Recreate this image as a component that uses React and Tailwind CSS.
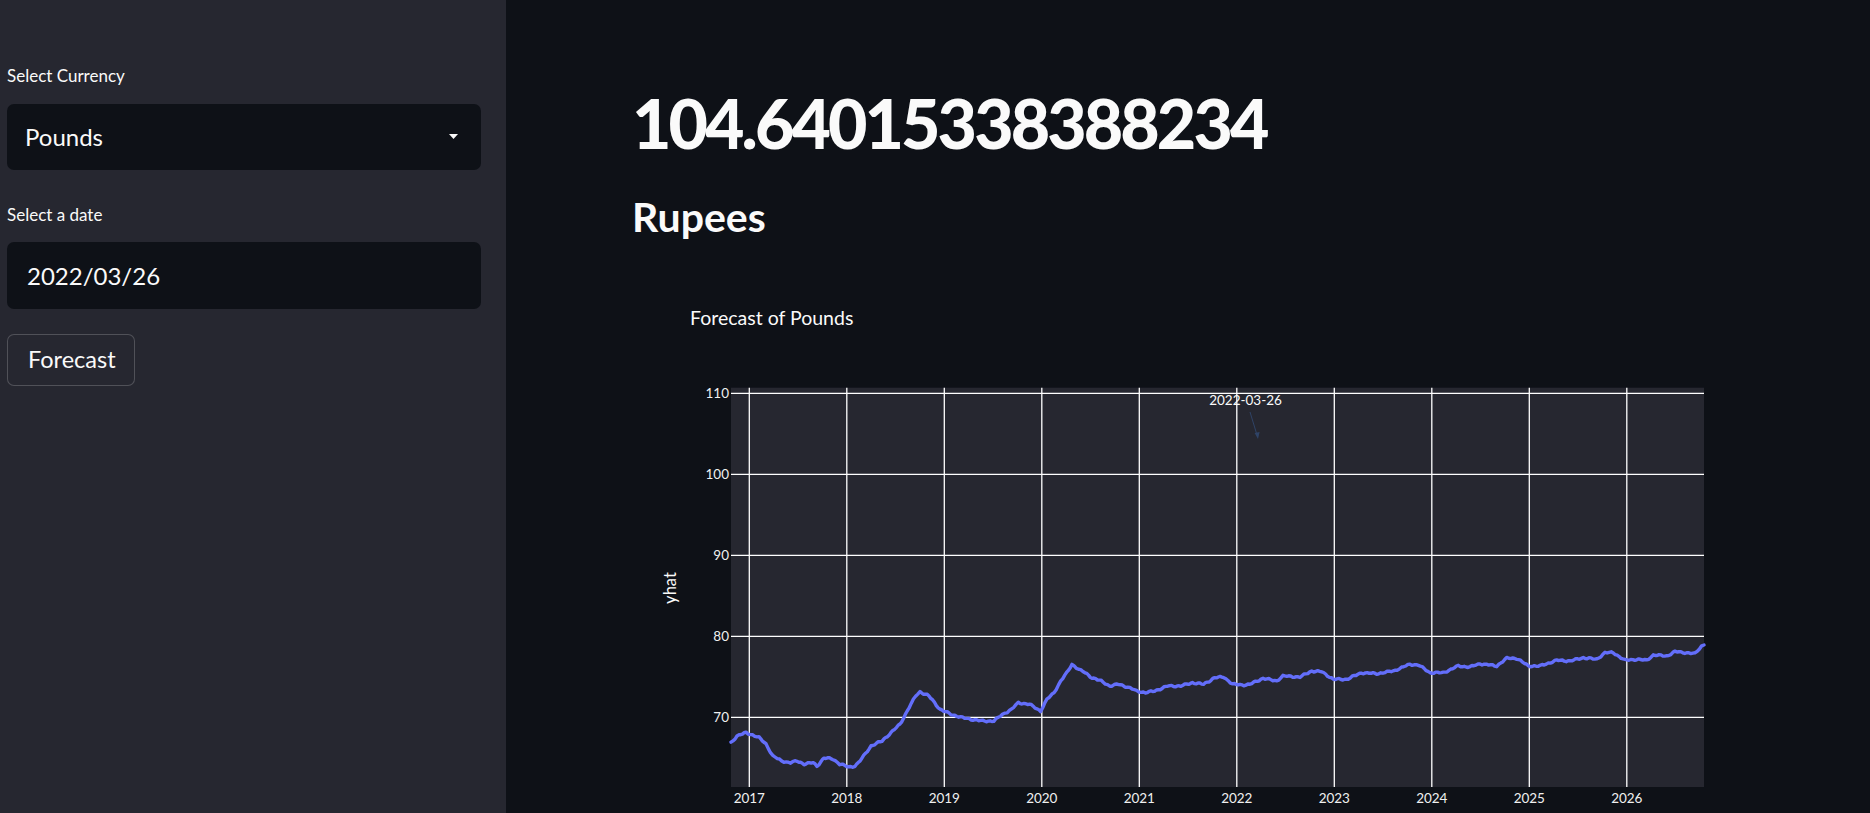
import React from "react";

const OX = 632;
const OY = 290;

const RAW = [
  [731, 741.7], [737, 735], [746, 731.7], [752.7, 734], [759, 736.7], [766, 743],
  [772.8, 755], [781.7, 760], [790.6, 761.7], [797, 760], [804, 763], [813, 761.7],
  [817, 765], [824, 757], [833, 758], [839.7, 763], [848.7, 766], [855, 765],
  [860, 760], [871, 745], [882, 740], [891, 731.7], [900, 723.3], [909, 706.7],
  [915.6, 695], [920, 690.7], [929, 695], [940, 708.3], [951, 713.3], [962.5, 716.7],
  [971, 718.3], [982.6, 720], [993.8, 720], [1002.7, 713.3], [1011.6, 708.3],
  [1018.3, 701.7], [1029.5, 703.3], [1040.6, 710], [1047, 698.3], [1054, 691.7],
  [1060.7, 680], [1067, 671.7], [1072, 663.3], [1078.6, 668.3], [1085, 671.7],
  [1092, 676.7], [1101, 680], [1109.8, 685], [1118.7, 683.3], [1127.7, 686],
  [1136.6, 690], [1145.5, 691.7], [1154.5, 690], [1167.8, 685], [1181, 685],
  [1192.4, 681.7], [1203.6, 683.3], [1214.7, 676.7], [1223.7, 676], [1232.6, 683.3],
  [1243.8, 684], [1250, 683.3], [1263, 677.3], [1276.7, 680], [1283, 675],
  [1300, 676], [1311.7, 670], [1321.7, 670.7], [1333.3, 678.3], [1346.7, 678.3],
  [1361.7, 671.7], [1376.7, 672.7], [1393.3, 670], [1410, 663.3], [1418.3, 664],
  [1430, 671.7], [1443.3, 671.7], [1458.3, 665], [1470, 666], [1480, 662.7],
  [1496.7, 665], [1506.7, 657.3], [1516.7, 657.3], [1528.3, 665], [1540, 665],
  [1556.7, 659.3], [1570, 660], [1583.3, 656.7], [1596.7, 658.3], [1605, 651.7],
  [1613.3, 651.7], [1625, 659.3], [1636.7, 658.3], [1646.7, 659.3], [1653.3, 654],
  [1666.7, 655], [1675, 650.7], [1686.7, 651.7], [1695, 652.7], [1701.7, 645],
  [1704, 644],
];

function buildPoints() {
  const pts = [];
  for (let i = 0; i < RAW.length - 1; i++) {
    const [x0, y0] = RAW[i];
    const [x1, y1] = RAW[i + 1];
    const steps = Math.max(1, Math.round((x1 - x0) / 2));
    for (let s = 0; s < steps; s++) {
      const t = s / steps;
      const x = x0 + (x1 - x0) * t;
      const jitter = Math.sin(x * 0.9) * 0.6 + Math.sin(x * 0.37) * 0.4;
      pts.push([x - OX, y0 + (y1 - y0) * t + jitter - OY]);
    }
  }
  const last = RAW[RAW.length - 1];
  pts.push([last[0] - OX, last[1] - OY]);
  return pts.map((p) => `${p[0].toFixed(1)},${p[1].toFixed(1)}`).join(" ");
}

const LINE = buildPoints();

const PLOT_L = 731 - OX;
const PLOT_T = 386.7 - OY;
const PLOT_W = 1704 - 731;
const PLOT_H = 786 - 386.7;

const years = [2017, 2018, 2019, 2020, 2021, 2022, 2023, 2024, 2025, 2026];
const yvals = [110, 100, 90, 80, 70];
const xOf = (yr) => 749.3 - OX + (yr - 2017) * 97.5;
const yOf = (v) => 392.3 - OY + (110 - v) * 8.1;

function Chart() {
  return (
    <svg width="1210" height="523" className="block" style={{ fontFamily: "Lato, 'Open Sans', sans-serif" }}>
      <text x="58" y="34" fill="#fafafa" fontSize="19.5">Forecast of Pounds</text>
      <rect x={PLOT_L} y={PLOT_T} width={PLOT_W} height={PLOT_H} fill="#262730" />
      {years.map((yr) => (
        <line key={yr} x1={xOf(yr)} x2={xOf(yr)} y1={PLOT_T} y2={PLOT_T + PLOT_H} stroke="#ffffff" strokeWidth="1.3" />
      ))}
      {yvals.map((v) => (
        <line key={v} x1={PLOT_L} x2={PLOT_L + PLOT_W} y1={yOf(v)} y2={yOf(v)} stroke="#ffffff" strokeWidth="1.3" />
      ))}
      <polyline points={LINE} fill="none" stroke="#636efa" strokeWidth="3.4" strokeLinejoin="round" strokeLinecap="round" />
      {yvals.map((v) => (
        <text key={v} x={PLOT_L - 2} y={yOf(v) + 5} fill="#f0f0f0" fontSize="13.5" textAnchor="end">{v}</text>
      ))}
      {years.map((yr) => (
        <text key={yr} x={xOf(yr)} y={512} fill="#f0f0f0" fontSize="13.5" textAnchor="middle">{yr}</text>
      ))}
      <text x="40" y="297" fill="#fafafa" fontSize="16.5" textAnchor="middle" dominantBaseline="middle" transform="rotate(-90 40 297)">yhat</text>
      <text x="613.5" y="114" fill="#fafafa" fontSize="13.5" textAnchor="middle">2022-03-26</text>
      <line x1="618" y1="121" x2="625" y2="144" stroke="#2f4366" strokeWidth="1" />
      <polygon points="626,148 622.6,142 627.6,141" fill="#2f4366" />
    </svg>
  );
}

export default function App() {
  return (
    <div className="flex h-[813px] w-full overflow-hidden bg-[#0e1117] text-[#fafafa]" style={{ fontFamily: "Lato, 'Open Sans', sans-serif" }}>
      <aside className="flex w-[506px] shrink-0 flex-col bg-[#262730] pl-[7px] pr-[25px] pt-[64px]">
        <div className="text-[17px] leading-[24px]">Select Currency</div>
        <div className="mt-4 flex h-[66px] items-center justify-between rounded-[7px] bg-[#0e1117] pl-[18px] pr-[23px]">
          <span className="text-[24px] leading-none">Pounds</span>
          <svg width="9" height="6" viewBox="0 0 9 6"><polygon points="0,0 9,0 4.5,5" fill="#fafafa" /></svg>
        </div>
        <div className="mt-[33px] text-[17px] leading-[24px]">Select a date</div>
        <div className="mt-[15px] flex h-[67px] items-center rounded-[7px] bg-[#0e1117] pl-[20px]">
          <span className="text-[24px] leading-none">2022/03/26</span>
        </div>
        <div className="mt-[25px]">
          <button className="flex h-[52px] w-[128px] items-center rounded-[7px] border border-[rgba(250,250,250,0.2)] bg-[#262730] pl-[20px] text-[23.5px] leading-none text-[#fafafa]">
            Forecast
          </button>
        </div>
      </aside>
      <main className="flex min-w-0 flex-1 flex-col pl-[126px] pt-[89px]">
        <h1 className="text-[68px] font-black leading-none tracking-[-2.9px]">104.64015338388234</h1>
        <h2 className="mt-[39px] text-[41px] font-bold leading-none">Rupees</h2>
        <div className="mt-[54px]">
          <Chart />
        </div>
      </main>
    </div>
  );
}
